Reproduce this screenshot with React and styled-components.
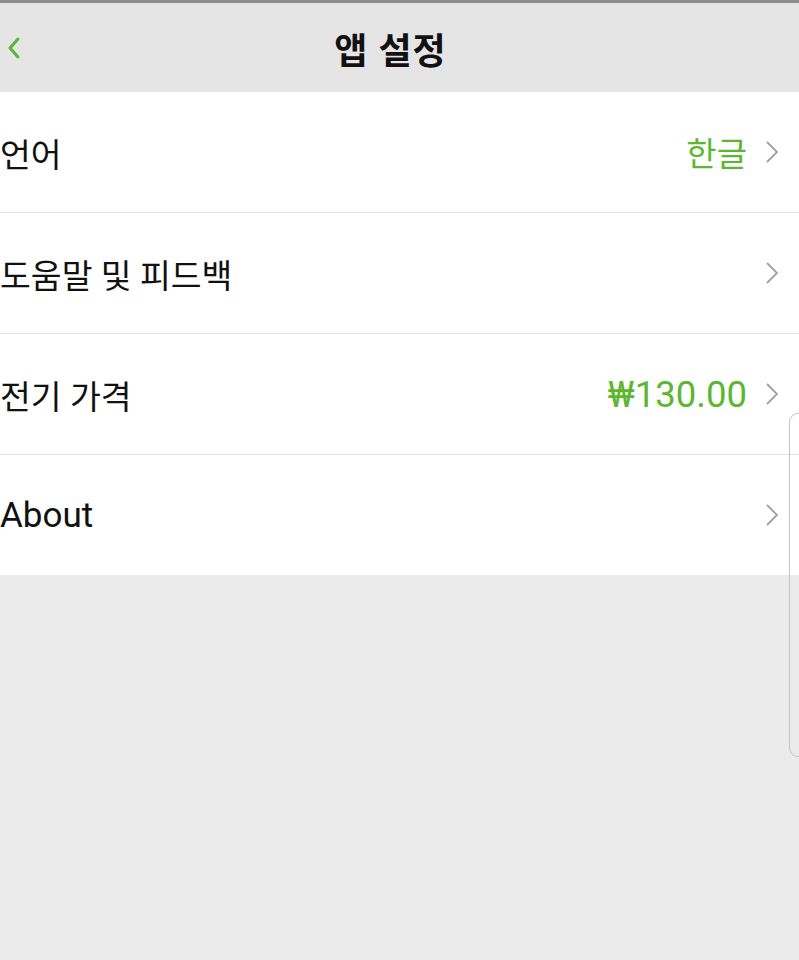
import React from 'react';
import styled, { createGlobalStyle } from 'styled-components';

const GlobalStyle = createGlobalStyle`
  html, body {
    margin: 0;
    padding: 0;
    background: #ebebeb;
  }
  body {
    font-family: Roboto, "Noto Sans CJK KR", sans-serif;
  }
`;

const GREEN = '#5bb72f';

const Screen = styled.div`
  position: relative;
  width: 799px;
  min-height: 960px;
  background: #ebebeb;
  border-top: 3px solid #8c8c8c;
  box-sizing: border-box;
  overflow: hidden;
`;

const Header = styled.header`
  position: relative;
  height: 89px;
  background: #e5e5e5;
  display: flex;
  align-items: center;
  justify-content: center;
  padding-right: 18px;
`;

const BackButton = styled.button`
  position: absolute;
  left: 2px;
  top: 50%;
  transform: translateY(-50%);
  border: 0;
  background: none;
  padding: 4px;
  display: flex;
`;

const Title = styled.h1`
  margin: 0;
  font-size: 36px;
  font-weight: 700;
  color: #111;
  letter-spacing: 1px;
`;

const List = styled.ul`
  list-style: none;
  margin: 0;
  padding: 0;
  background: #fff;
`;

const Row = styled.li`
  height: 120px;
  display: flex;
  align-items: center;
  border-bottom: ${p => (p.$last ? 'none' : '1px solid #e3e3e3')};
  box-sizing: content-box;
  padding-right: 20px;
`;

const Label = styled.span`
  flex: 1;
  font-size: ${p => (p.$latin ? '35px' : '33.5px')};
  color: #111;
`;

const Value = styled.span`
  font-size: ${p => (p.$numeric ? '36.5px' : '33px')};
  color: ${GREEN};
  margin-right: 18px;
`;

const Chevron = styled.svg`
  width: 14px;
  height: 24px;
  flex: none;
`;

const EdgeHandle = styled.div`
  position: absolute;
  left: 789px;
  top: 410px;
  width: 30px;
  height: 344px;
  border: 1.5px solid #c4c4c4;
  border-radius: 9px;
  box-sizing: border-box;
`;

const rows = [
  { label: '언어', value: '한글' },
  { label: '도움말 및 피드백' },
  { label: '전기 가격', value: '₩130.00', numeric: true },
  { label: 'About', latin: true },
];

export default function App() {
  return (
    <Screen>
      <GlobalStyle />
      <Header>
        <BackButton aria-label="back">
          <svg width="16" height="24" viewBox="0 0 16 24">
            <path d="M12 3 L4 12 L12 21" fill="none" stroke={GREEN} strokeWidth="3" strokeLinecap="round" strokeLinejoin="round" />
          </svg>
        </BackButton>
        <Title>앱 설정</Title>
      </Header>
      <List>
        {rows.map((r, i) => (
          <Row key={r.label} $last={i === rows.length - 1}>
            <Label $latin={r.latin}>{r.label}</Label>
            {r.value && <Value $numeric={r.numeric}>{r.value}</Value>}
            <Chevron viewBox="0 0 14 24">
              <path d="M2 2 L12 12 L2 22" fill="none" stroke="#a0a0a0" strokeWidth="1.8" />
            </Chevron>
          </Row>
        ))}
      </List>
      <EdgeHandle />
    </Screen>
  );
}
